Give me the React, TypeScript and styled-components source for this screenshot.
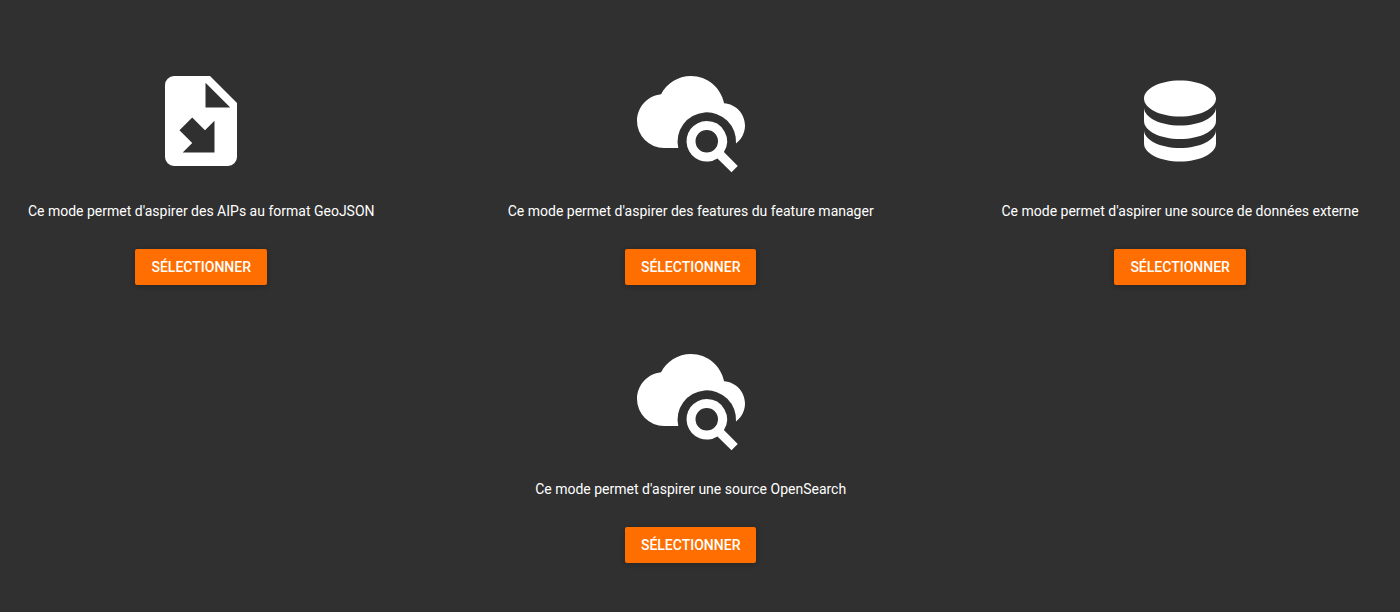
import React from "react";
import styled, { createGlobalStyle } from "styled-components";

const GlobalStyle = createGlobalStyle`
  body {
    margin: 0;
    background: #303030;
    color: #ffffff;
    font-family: Roboto, "Liberation Sans", sans-serif;
    font-size: 14px;
    line-height: 20px;
  }
`;

const SourceGrid = styled.main`
  display: grid;
  grid-template-columns: repeat(3, minmax(0, 1fr));
  column-gap: 87px;
  row-gap: 60px;
  padding: 67px 1.33% 49px 0;
`;

const SourceCard = styled.section<{ $column?: number }>`
  grid-column: ${({ $column }) => $column ?? "auto"};
  display: flex;
  flex-direction: column;
  align-items: center;
`;

const SourceIcon = styled.svg`
  width: 108px;
  height: 108px;
  fill: currentColor;
`;

const Description = styled.p`
  margin: 26px 0 28px;
  text-align: center;
`;

const SelectButton = styled.button`
  height: 36px;
  padding: 0 16px;
  border: 0;
  border-radius: 2px;
  background: #ff6e00;
  color: #ffffff;
  font: 500 14px/36px Roboto, "Liberation Sans", sans-serif;
  text-transform: uppercase;
  cursor: pointer;
  box-shadow: 0 1px 6px rgba(0, 0, 0, 0.12), 0 1px 4px rgba(0, 0, 0, 0.12);
`;

const icons = {
  file:
    "M14,2H6A2,2 0 0,0 4,4V20A2,2 0 0,0 6,22H18A2,2 0 0,0 20,20V8L14,2M13,9V3.5L18.5,9H13M10.05,11.22L12.88,14.05L15,11.93V19H7.93L10.05,16.88L7.22,14.05L10.05,11.22Z",
  cloudSearch:
    "M19.35,8.04C18.67,4.59 15.64,2 12,2C9.11,2 6.6,3.64 5.35,6.04C2.34,6.36 0,8.91 0,12A6,6 0 0,0 6,18H9.17A6.5,6.5 0 1,1 22,17C23.22,16.08 24,14.63 24,13C24,10.36 21.95,8.22 19.35,8.04ZM15.5,12A4.5,4.5 0 1,0 17.88,20.32L21,23.39L22.39,22L19.31,18.9A4.5,4.5 0 0,0 15.5,12ZM15.5,14A2.5,2.5 0 1,1 15.5,19A2.5,2.5 0 1,1 15.5,14Z",
  database:
    "M12,3C7.58,3 4,4.79 4,7C4,9.21 7.58,11 12,11C16.42,11 20,9.21 20,7C20,4.79 16.42,3 12,3M4,9V12C4,14.21 7.58,16 12,16C16.42,16 20,14.21 20,12V9C20,11.21 16.42,13 12,13C7.58,13 4,11.21 4,9M4,14V17C4,19.21 7.58,21 12,21C16.42,21 20,19.21 20,17V14C20,16.21 16.42,18 12,18C7.58,18 4,16.21 4,14Z",
};

type Source = {
  id: string;
  icon: keyof typeof icons;
  text: string;
  column?: number;
};

const sources: Source[] = [
  { id: "geojson", icon: "file", text: "Ce mode permet d'aspirer des AIPs au format GeoJSON" },
  { id: "features", icon: "cloudSearch", text: "Ce mode permet d'aspirer des features du feature manager" },
  { id: "external", icon: "database", text: "Ce mode permet d'aspirer une source de données externe" },
  { id: "opensearch", icon: "cloudSearch", text: "Ce mode permet d'aspirer une source OpenSearch", column: 2 },
];

export default function App() {
  return (
    <>
      <GlobalStyle />
      <SourceGrid>
        {sources.map(({ id, icon, text, column }) => (
          <SourceCard key={id} $column={column}>
            <SourceIcon viewBox="0 0 24 24" aria-hidden="true">
              <path fillRule="evenodd" d={icons[icon]} />
            </SourceIcon>
            <Description id={id}>{text}</Description>
            <SelectButton type="button" aria-describedby={id}>
              Sélectionner
            </SelectButton>
          </SourceCard>
        ))}
      </SourceGrid>
    </>
  );
}
